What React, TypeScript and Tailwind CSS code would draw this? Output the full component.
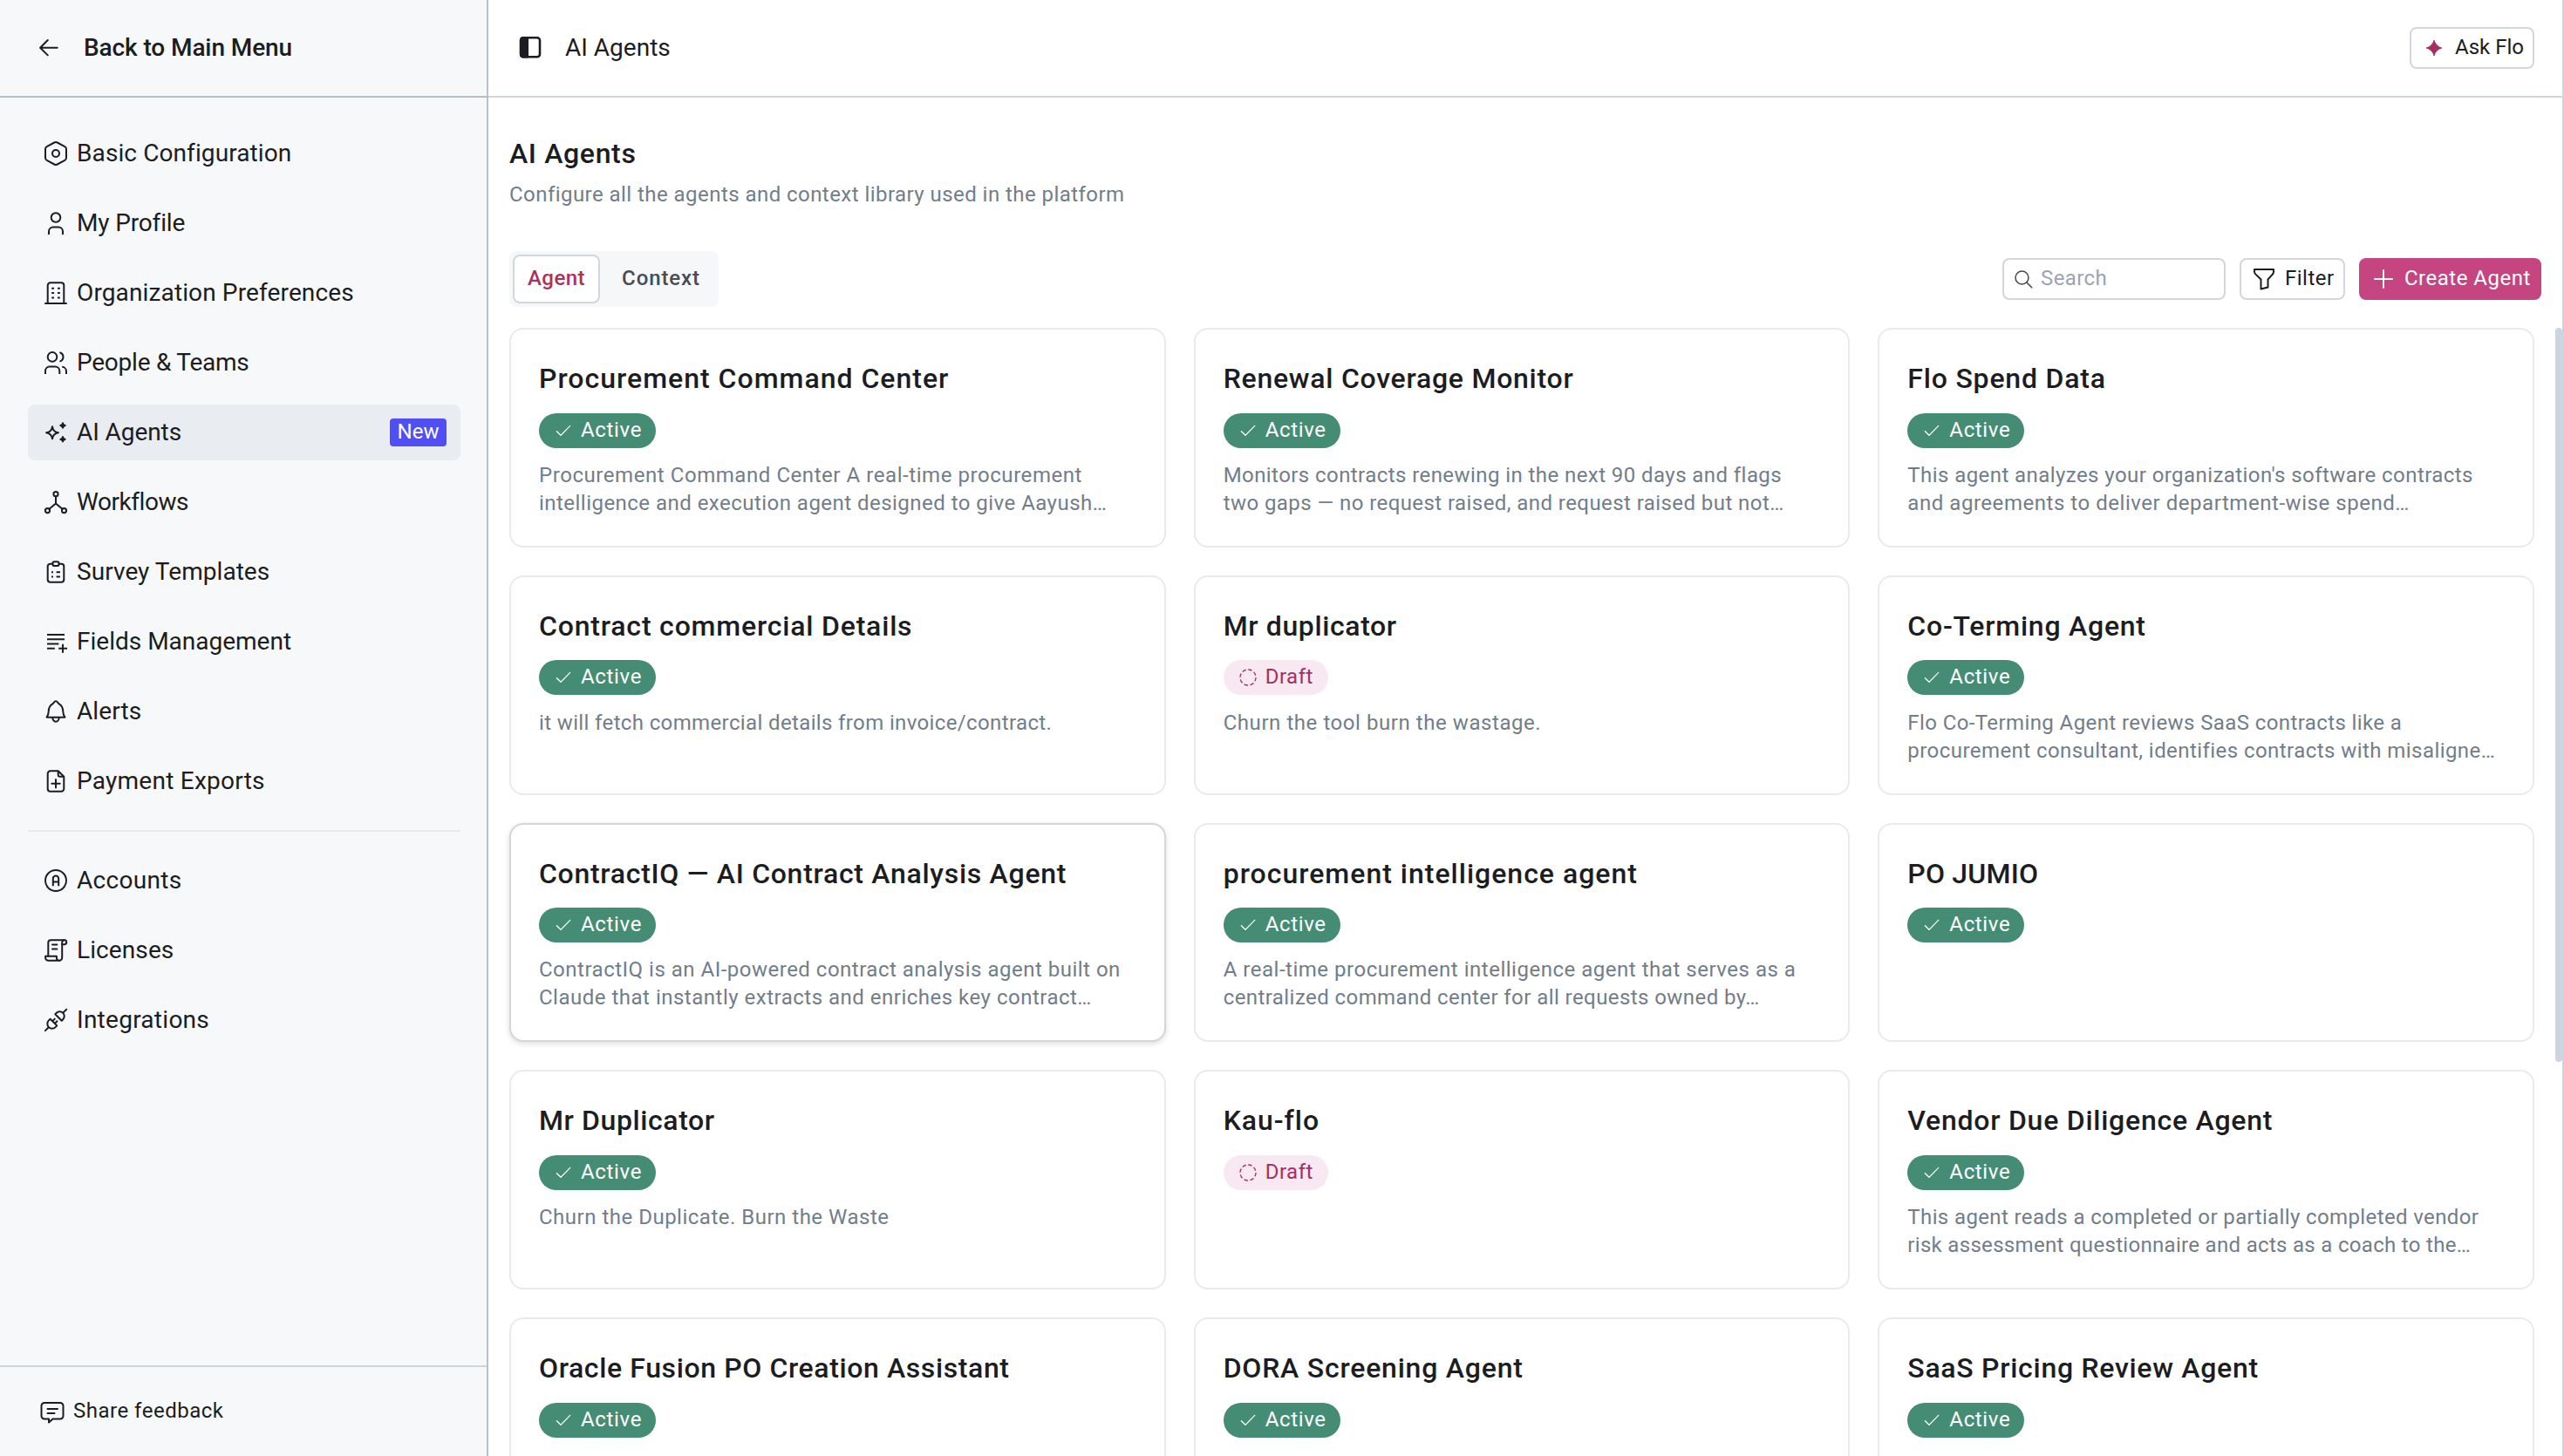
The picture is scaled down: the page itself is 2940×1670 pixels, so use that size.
import type { ReactNode } from "react";

function Icon({ children, className = "size-8" }: { children: ReactNode; className?: string }) {
  return (
    <svg
      viewBox="0 0 32 32"
      className={`shrink-0 ${className}`}
      fill="none"
      stroke="currentColor"
      strokeWidth={2}
      strokeLinecap="round"
      strokeLinejoin="round"
      aria-hidden="true"
    >
      {children}
    </svg>
  );
}

const icons = {
  config: (
    <Icon>
      <path d="M4 11Q4 9 5.7 8.1L14.3 3.5Q16 2.7 17.7 3.5L26.3 8.1Q28 9 28 11V21Q28 23 26.3 23.9L17.7 28.5Q16 29.3 14.3 28.5L5.7 23.9Q4 23 4 21Z" />
      <circle cx="16" cy="16" r="4" />
    </Icon>
  ),
  profile: (
    <Icon>
      <circle cx="16" cy="9.5" r="5.3" />
      <path strokeLinecap="butt" d="M8 29v-3.5a5 5 0 0 1 5-5h6a5 5 0 0 1 5 5V29" />
    </Icon>
  ),
  building: (
    <Icon>
      <path d="M6.7 28V7.3a3 3 0 0 1 3-3h12.6a3 3 0 0 1 3 3V28" />
      <path d="M4 28h24" />
      <path strokeLinecap="butt" d="M11.2 10.7h2.8M18 10.7h2.8M11.2 16h2.8M18 16h2.8M11.2 21.5h2.8M18 21.5h2.8" />
    </Icon>
  ),
  people: (
    <Icon>
      <circle cx="12" cy="9.4" r="5.3" />
      <path strokeLinecap="butt" d="M4 29v-3.5a5 5 0 0 1 5-5h6.3a5 5 0 0 1 5 5V29" />
      <path d="M21.2 4.5a5.3 5.3 0 0 1 0 9.8" />
      <path strokeLinecap="butt" d="M23.2 20.8a5 5 0 0 1 4.8 5V29" />
    </Icon>
  ),
  sparkles: (
    <Icon>
      <path d="M12 9.3Q12.9 15.3 18.9 16.3Q12.9 17.3 12 23.3Q11.1 17.3 5.1 16.3Q11.1 15.3 12 9.3Z" />
      <path
        strokeWidth={1.8}
        fill="currentColor"
        d="M24 5.2Q24.4 7.6 26.8 8Q24.4 8.4 24 10.8Q23.6 8.4 21.2 8Q23.6 7.6 24 5.2ZM24 21Q24.4 23.4 26.8 23.8Q24.4 24.2 24 26.6Q23.6 24.2 21.2 23.8Q23.6 23.4 24 21Z"
      />
    </Icon>
  ),
  workflow: (
    <Icon>
      <circle cx="16" cy="6.7" r="2.6" />
      <circle cx="6.5" cy="25.6" r="2.6" />
      <circle cx="25.5" cy="25.6" r="2.6" />
      <path d="M16 9.3v8.2L8.5 23.8M16 17.5l7.5 6.3" />
    </Icon>
  ),
  survey: (
    <Icon>
      <path d="M12.3 6.7H9.7a3 3 0 0 0-3 3v15a3 3 0 0 0 3 3h12.6a3 3 0 0 0 3-3v-15a3 3 0 0 0-3-3h-2.6" />
      <rect x="12.3" y="4.3" width="7.4" height="4.8" rx="2.4" />
      <path strokeLinecap="butt" d="M11 16.3h2M16.6 16.3h4.4M11 21.5h2M16.6 21.5h4.4" />
    </Icon>
  ),
  fields: (
    <Icon>
      <path strokeLinecap="butt" d="M6 8h20M6 13.2h20M6 18.5h13.4M6 23.8h8.8M19.2 23.8H29M24 18.8v10" />
    </Icon>
  ),
  bell: (
    <Icon>
      <path d="M5.6 22.7C7 20.9 7.7 19.5 7.7 16C7.7 11.5 10 8.6 12.6 7.1C13.6 6.2 14.3 4.3 16 4.3C17.7 4.3 18.4 6.2 19.4 7.1C22 8.6 24.3 11.5 24.3 16C24.3 19.5 25 20.9 26.4 22.7Z" />
      <path d="M12.3 23a3.7 4.7 0 0 0 7.4 0" />
    </Icon>
  ),
  filePlus: (
    <Icon>
      <path d="M18.7 4.3h-9a3 3 0 0 0-3 3v17.4a3 3 0 0 0 3 3h12.6a3 3 0 0 0 3-3V10.7zv4.4a2 2 0 0 0 2 2h4.6M16 14v9.4M11.3 18.7h9.4" />
    </Icon>
  ),
  accounts: (
    <Icon>
      <circle cx="16" cy="16" r="12" />
      <path strokeLinecap="butt" d="M12.8 22.3v-8.6a3.2 3.2 0 0 1 6.4 0v8.6M12.8 17.5h6.4" />
    </Icon>
  ),
  licenses: (
    <Icon>
      <path d="M7.3 22.5V7.3a3 3 0 0 1 3-3h15.5a2.4 2.4 0 0 1 0 4.9h-2.6" />
      <path d="M25.8 4.3a2.6 2.6 0 0 0-2.6 2.6v17.5a3.3 3.3 0 0 1-3.3 3.3" />
      <path d="M19.9 27.7a3 3 0 0 1-3-3v-2H4.1v1.7a3.3 3.3 0 0 0 3.3 3.3zM12 9.5h5.4M12 14.6h5.4" />
    </Icon>
  ),
  integrations: (
    <Icon>
      <path d="M3.9 28.1l3.4-3.4M9.6 14.7l7.7 7.7l-1.7 1.7a5.4 5.4 0 0 1-7.7-7.7ZM12.2 17.2l2.6-2.6M14.9 19.9l2.6-2.6" />
      <path d="M15.3 9.3l7.4 7.4l1.5-1.5a5.2 5.2 0 0 0-7.4-7.4ZM25.1 6.9l3.1-3.1" />
    </Icon>
  ),
};

type NavItem = { label: string; icon: ReactNode; tracking: string; active?: boolean };

const primaryNav: NavItem[] = [
  { label: "Basic Configuration", icon: icons.config, tracking: "tracking-[0.1px]" },
  { label: "My Profile", icon: icons.profile, tracking: "tracking-[-0.15px]" },
  { label: "Organization Preferences", icon: icons.building, tracking: "tracking-[0.13px]" },
  { label: "People & Teams", icon: icons.people, tracking: "tracking-[-0.24px]" },
  { label: "AI Agents", icon: icons.sparkles, tracking: "tracking-[-0.08px]", active: true },
  { label: "Workflows", icon: icons.workflow, tracking: "tracking-[-0.45px]" },
  { label: "Survey Templates", icon: icons.survey, tracking: "tracking-[0.05px]" },
  { label: "Fields Management", icon: icons.fields, tracking: "tracking-[0px]" },
  { label: "Alerts", icon: icons.bell, tracking: "tracking-[0.1px]" },
  { label: "Payment Exports", icon: icons.filePlus, tracking: "tracking-[0.25px]" },
];

const secondaryNav: NavItem[] = [
  { label: "Accounts", icon: icons.accounts, tracking: "tracking-[0.3px]" },
  { label: "Licenses", icon: icons.licenses, tracking: "tracking-[0.1px]" },
  { label: "Integrations", icon: icons.integrations, tracking: "tracking-[0.27px]" },
];

function NavRow({ item }: { item: NavItem }) {
  return (
    <a
      className={`flex h-16 items-center gap-2 rounded-lg pr-4 pl-4 text-[28px] leading-8 ${item.active ? "bg-[#e9ecf1]" : ""}`}
    >
      {item.icon}
      <span className={`grow whitespace-nowrap ${item.tracking}`}>{item.label}</span>
      {item.active && (
        <span className="flex h-8 w-[65px] items-center justify-center rounded bg-[#4f4ff5] pb-0.5 text-2xl leading-8 text-white">
          New
        </span>
      )}
    </a>
  );
}

function Sidebar() {
  return (
    <aside className="flex w-[560px] shrink-0 flex-col border-r-2 border-[#b9c1ce] bg-[#f7f8fa]">
      <div className="flex h-28 shrink-0 items-center gap-6 border-b-2 border-[#b4bfc9] pl-10">
        <Icon>
          <path d="M25.7 15.7H6.2M14.8 7l-8.7 8.7l8.7 8.7" />
        </Icon>
        <span className="text-[28px] leading-8 font-medium tracking-[-0.1px]">Back to Main Menu</span>
      </div>
      <nav className="flex grow flex-col gap-6 pt-8 pr-[30px] pl-8">
        <div className="flex flex-col gap-4">
          {primaryNav.map((item) => (
            <NavRow key={item.label} item={item} />
          ))}
        </div>
        <hr className="border-t-2 border-[#e8eaed]" />
        <div className="flex flex-col gap-4">
          {secondaryNav.map((item) => (
            <NavRow key={item.label} item={item} />
          ))}
        </div>
      </nav>
      <div className="flex h-[104px] shrink-0 items-center gap-2 border-t-2 border-[#cdd5dc] pl-[44px]">
        <Icon>
          <path d="M7 6h18a3.5 3.5 0 0 1 3.5 3.5v11.5a3.5 3.5 0 0 1-3.5 3.5h-8.5l-4.5 4v-4H7a3.5 3.5 0 0 1-3.5-3.5V9.5A3.5 3.5 0 0 1 7 6zM10.5 13h11.5M10.5 18h8" />
        </Icon>
        <span className="pb-0.5 text-2xl tracking-[0.5px]">Share feedback</span>
      </div>
    </aside>
  );
}

type Agent = {
  name: string;
  nameTracking: string;
  draft?: boolean;
  hovered?: boolean;
  lines?: [string, string][];
};

const agents: Agent[] = [
  {
    name: "Procurement Command Center",
    nameTracking: "tracking-[1px]",
    lines: [
      ["Procurement Command Center A real-time procurement", "tracking-[0.56px]"],
      ["intelligence and execution agent designed to give Aayush…", "tracking-[0.47px]"],
    ],
  },
  {
    name: "Renewal Coverage Monitor",
    nameTracking: "tracking-[0.74px]",
    lines: [
      ["Monitors contracts renewing in the next 90 days and flags", "tracking-[0.43px]"],
      ["two gaps — no request raised, and request raised but not…", "tracking-[0.43px]"],
    ],
  },
  {
    name: "Flo Spend Data",
    nameTracking: "tracking-[0.8px]",
    lines: [
      ["This agent analyzes your organization's software contracts", "tracking-[0.43px]"],
      ["and agreements to deliver department-wise spend…", "tracking-[0.54px]"],
    ],
  },
  {
    name: "Contract commercial Details",
    nameTracking: "tracking-[0.81px]",
    lines: [["it will fetch commercial details from invoice/contract.", "tracking-[0.37px]"]],
  },
  {
    name: "Mr duplicator",
    nameTracking: "tracking-[0.62px]",
    draft: true,
    lines: [["Churn the tool burn the wastage.", "tracking-[0.56px]"]],
  },
  {
    name: "Co-Terming Agent",
    nameTracking: "tracking-[0.76px]",
    lines: [
      ["Flo Co-Terming Agent reviews SaaS contracts like a", "tracking-[0.4px]"],
      ["procurement consultant, identifies contracts with misaligne…", "tracking-[0.44px]"],
    ],
  },
  {
    name: "ContractIQ — AI Contract Analysis Agent",
    nameTracking: "tracking-[0.71px]",
    hovered: true,
    lines: [
      ["ContractIQ is an AI-powered contract analysis agent built on", "tracking-[0.5px]"],
      ["Claude that instantly extracts and enriches key contract…", "tracking-[0.5px]"],
    ],
  },
  {
    name: "procurement intelligence agent",
    nameTracking: "tracking-[1px]",
    lines: [
      ["A real-time procurement intelligence agent that serves as a", "tracking-[0.52px]"],
      ["centralized command center for all requests owned by…", "tracking-[0.43px]"],
    ],
  },
  { name: "PO JUMIO", nameTracking: "tracking-[0.2px]" },
  {
    name: "Mr Duplicator",
    nameTracking: "tracking-[0.6px]",
    lines: [["Churn the Duplicate. Burn the Waste", "tracking-[0.5px]"]],
  },
  { name: "Kau-flo", nameTracking: "tracking-[0.95px]", draft: true },
  {
    name: "Vendor Due Diligence Agent",
    nameTracking: "tracking-[0.75px]",
    lines: [
      ["This agent reads a completed or partially completed vendor", "tracking-[0.38px]"],
      ["risk assessment questionnaire and acts as a coach to the…", "tracking-[0.31px]"],
    ],
  },
  { name: "Oracle Fusion PO Creation Assistant", nameTracking: "tracking-[0.61px]" },
  { name: "DORA Screening Agent", nameTracking: "tracking-[0.78px]" },
  { name: "SaaS Pricing Review Agent", nameTracking: "tracking-[0.71px]" },
];

function StatusBadge({ draft }: { draft?: boolean }) {
  if (draft) {
    return (
      <span className="flex h-10 w-[120px] items-center gap-1.5 rounded-full bg-[#f8e8f1] pl-3.5 text-2xl leading-8 tracking-[0.5px] text-[#a3315f]">
        <Icon className="size-7">
          <circle cx="16" cy="16" r="10.3" strokeWidth={1.6} strokeLinecap="butt" strokeDasharray="5.09 3" />
        </Icon>
        <span className="pb-0.5">Draft</span>
      </span>
    );
  }
  return (
    <span className="flex h-10 w-[134px] items-center gap-1.5 rounded-full bg-[#458c74] pl-3.5 text-2xl leading-8 tracking-[0.65px] text-white">
      <Icon className="size-7">
        <path strokeWidth={1.5} d="M7.3 16.8l5.3 5.3L24.8 9.6" />
      </Icon>
      <span className="pb-0.5">Active</span>
    </span>
  );
}

function AgentCard({ agent }: { agent: Agent }) {
  return (
    <article
      className={`flex h-[251.75px] flex-col items-start rounded-2xl border-2 bg-white p-8 ${
        agent.hovered ? "border-[#d3d6db] shadow-[0_2px_6px_rgba(0,0,0,0.14)]" : "border-[#e8eaec]"
      }`}
    >
      <h2 className={`text-[32px] leading-12 font-medium whitespace-nowrap ${agent.nameTracking}`}>{agent.name}</h2>
      <div className="mt-[15.6px]">
        <StatusBadge draft={agent.draft} />
      </div>
      <p className="mt-[15.4px] text-2xl leading-8 text-[#727d8a]">
        {agent.lines?.map(([text, tracking]) => (
          <span key={text} className={`block whitespace-nowrap ${tracking}`}>
            {text}
          </span>
        ))}
      </p>
    </article>
  );
}

function TopBar() {
  return (
    <header className="flex h-28 shrink-0 items-center justify-between border-b-2 border-[#d1d6dc] pr-8 pl-8">
      <div className="flex items-center gap-6">
        <Icon>
          <rect x="5" y="4.3" width="22" height="22" rx="3" strokeWidth={2.6} />
          <path fill="currentColor" stroke="none" d="M4 7a4 4 0 0 1 4-4h6v24.6H8a4 4 0 0 1-4-4z" />
        </Icon>
        <span className="text-[28px] leading-8">AI Agents</span>
      </div>
      <button className="flex h-12 w-[143px] items-center rounded-lg border-2 border-[#d3d7dc] pl-[17px] text-2xl leading-8">
        <svg viewBox="0 0 18 18" className="mr-[15px] size-[18px]" fill="#a52f63" aria-hidden="true">
          <path d="M9 0Q10.9 7.1 18 9Q10.9 10.9 9 18Q7.1 10.9 0 9Q7.1 7.1 9 0Z" stroke="#a52f63" strokeWidth={0.8} />
        </svg>
        <span className="pb-0.5">Ask Flo</span>
      </button>
    </header>
  );
}

function Toolbar() {
  return (
    <div className="flex items-center justify-between pr-6 pl-6">
      <div className="flex h-16 w-60 items-center gap-2 rounded-lg bg-[#f6f7f9] p-1 text-2xl">
        <button className="flex h-14 w-[100px] items-center justify-center rounded-lg border-2 border-[#d3d6dc] bg-white pb-0.5 font-medium tracking-[0.5px] text-[#a63360]">
          Agent
        </button>
        <button className="flex h-14 grow items-center justify-center pb-0.5 font-medium tracking-[0.9px] text-[#464d57]">
          Context
        </button>
      </div>
      <div className="flex items-center gap-4 text-2xl leading-8">
        <div className="flex h-12 w-64 items-center gap-2 rounded-lg border-2 border-[#d3d7dc] pl-2.5 tracking-[0.4px] text-[#9ba4b0]">
          <Icon className="size-6 text-[#42474e]">
            <circle cx="14" cy="14" r="10" />
            <path d="M21.3 21.3L29 29" />
          </Icon>
          <span className="pb-0.5">Search</span>
        </div>
        <button className="flex h-12 w-[121px] items-center gap-2 rounded-lg border-2 border-[#d3d7dc] pl-2.5 tracking-[0.5px]">
          <Icon>
            <path d="M5 5h22v2.6c0 1.2-.4 2.3-1.2 3.1L20.5 16.500v9L12.5 27.5v-11L6.2 10.4C5.4 9.5 5 8.5 5 7.5z" />
          </Icon>
          <span className="pb-0.5">Filter</span>
        </button>
        <button className="flex h-12 w-[209px] items-center gap-2 rounded-lg bg-[#c54581] pl-3 tracking-[0.5px] text-white">
          <Icon>
            <path d="M16 6v20M6 16h20" />
          </Icon>
          <span className="pb-0.5">Create Agent</span>
        </button>
      </div>
    </div>
  );
}

export default function App() {
  return (
    <div className="flex h-[1670px] w-[2940px] overflow-hidden bg-white font-['Roboto',sans-serif] text-[#1b1d22]">
      <Sidebar />
      <main className="flex min-w-0 grow flex-col border-r-2 border-[#cdd4de]">
        <TopBar />
        <div className="px-6 pt-10">
          <h1 className="text-[32px] leading-12 font-medium tracking-[0.65px]">AI Agents</h1>
          <p className="mt-[7px] text-2xl leading-8 tracking-[0.45px] text-[#727d8a]">
            Configure all the agents and context library used in the platform
          </p>
        </div>
        <div className="mt-[49px]">
          <Toolbar />
        </div>
        <div className="mt-6 flex min-h-0 grow overflow-hidden">
          <div className="grid grow auto-rows-min grid-cols-3 gap-8 pr-6 pl-6">
            {agents.map((agent) => (
              <AgentCard key={agent.name} agent={agent} />
            ))}
          </div>
          <div className="h-[842px] w-2 shrink-0 rounded-full bg-[#ccd5e0]" />
        </div>
      </main>
    </div>
  );
}
